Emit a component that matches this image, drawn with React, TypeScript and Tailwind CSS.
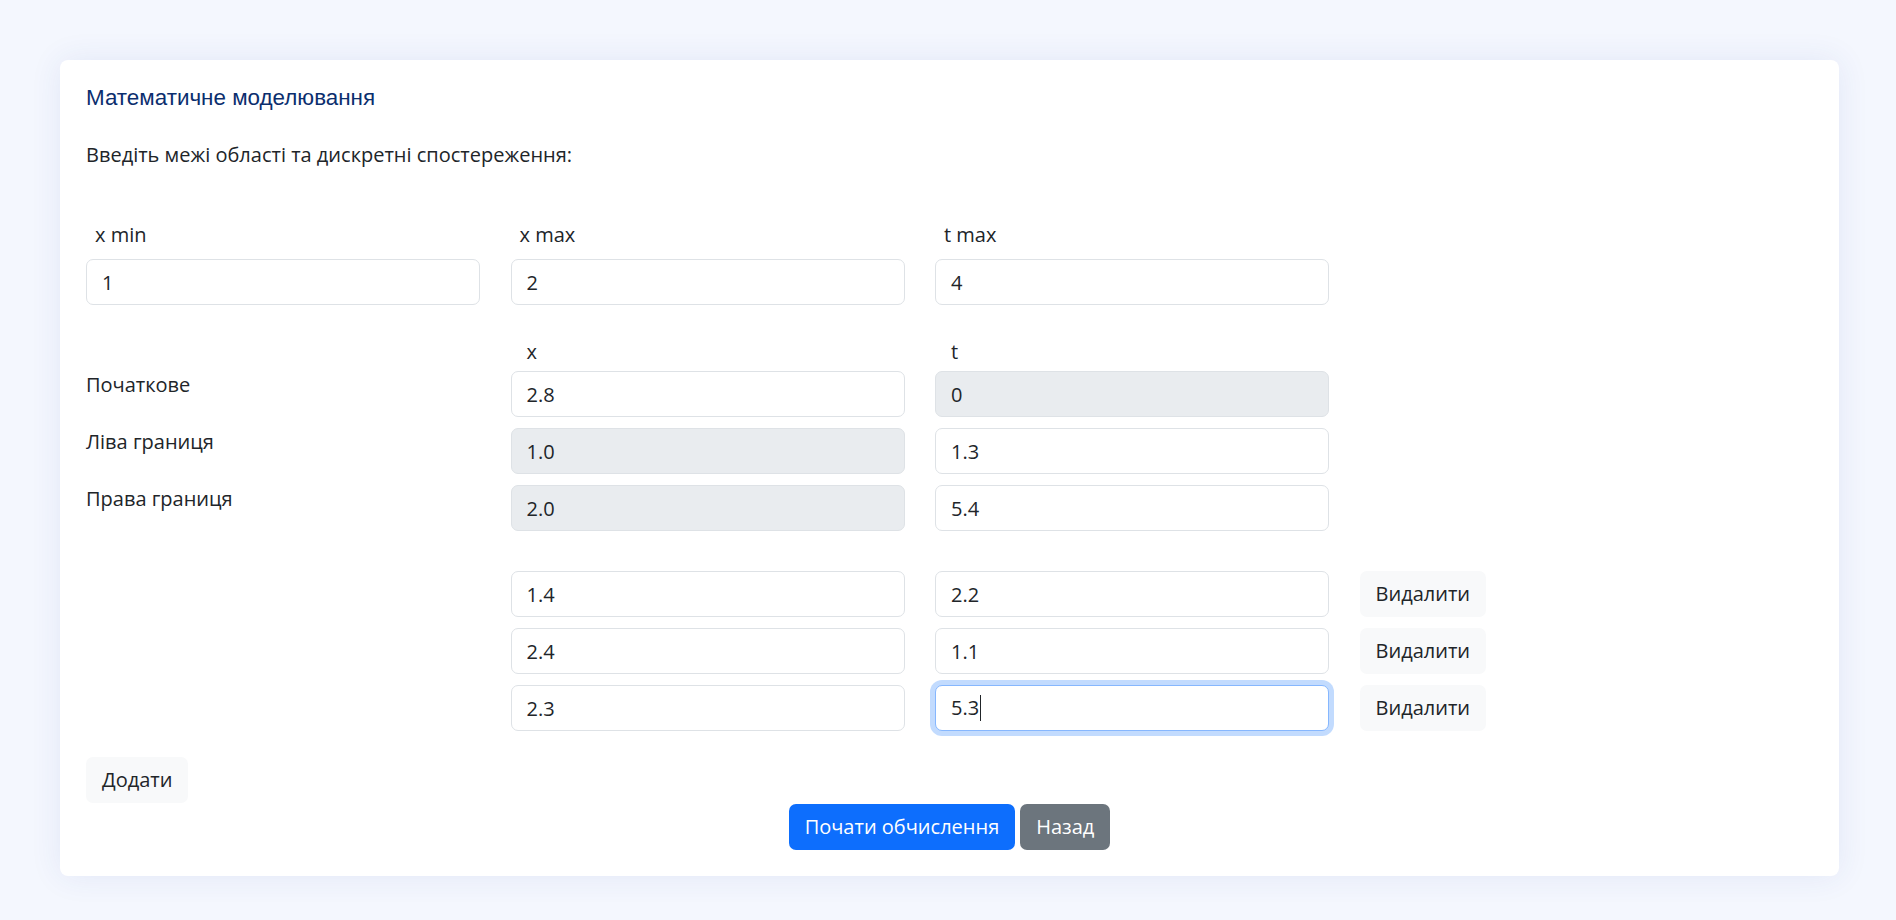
import React from "react";

const body = "font-['Open_Sans','Noto_Sans',sans-serif]";

function Field({
  value,
  disabled,
  focused,
}: {
  value: string;
  disabled?: boolean;
  focused?: boolean;
}) {
  if (focused) {
    return (
      <div className="h-[46px] w-[394px] rounded-[7px] border border-[#86b7fe] bg-white px-[15px] flex items-center text-[20px] text-[#212529] shadow-[0_0_0_5px_rgba(13,110,253,0.25)]">
        <span>{value}</span>
        <span className="ml-[1px] h-[26px] w-[1px] bg-[#212529]" />
      </div>
    );
  }
  return (
    <input
      readOnly
      value={value}
      disabled={disabled}
      className={
        "h-[46px] w-[394px] rounded-[7px] border border-[#dee2e6] px-[15px] text-[20px] text-[#212529] outline-none " +
        (disabled ? "bg-[#e9ecef]" : "bg-white")
      }
    />
  );
}

function LightButton({ children }: { children: React.ReactNode }) {
  return (
    <button className="h-[46px] rounded-[7px] bg-[#f8f9fa] px-[16px] text-[20px] text-[#212529]">
      {children}
    </button>
  );
}

export default function App() {
  const boundaries = [
    { label: "Початкове", x: "2.8", t: "0", xDis: false, tDis: true },
    { label: "Ліва границя", x: "1.0", t: "1.3", xDis: true, tDis: false },
    { label: "Права границя", x: "2.0", t: "5.4", xDis: true, tDis: false },
  ];

  const observations = [
    { x: "1.4", t: "2.2" },
    { x: "2.4", t: "1.1" },
    { x: "2.3", t: "5.3", focused: true },
  ];

  return (
    <div className={"min-h-screen bg-[#f4f7fe] pt-[60px] pb-[44px] " + body}>
      <div className="ml-[60px] w-[1779px] rounded-[8px] bg-white px-[26px] pt-[25px] pb-[26px] shadow-[0_0_32px_rgba(40,70,170,0.09)]">
        {/* Header */}
        <h5 className="h-[26px] font-['Liberation_Sans',Arial,sans-serif] text-[22.4px] leading-[26px] text-[#0b2e6e]">
          Математичне моделювання
        </h5>
        <p className="mt-[29px] text-[20px] leading-[30px] text-[#212529]">
          Введіть межі області та дискретні спостереження:
        </p>

        {/* Domain limits */}
        <div className="mt-[50px] flex gap-[30.5px]">
          {[
            ["x min", "1"],
            ["x max", "2"],
            ["t max", "4"],
          ].map(([label, value]) => (
            <div key={label} className="flex w-[394px] flex-col gap-[9px]">
              <label className="pl-[9px] text-[20px] leading-[30px] text-[#212529]">
                {label}
              </label>
              <Field value={value} />
            </div>
          ))}
        </div>

        {/* Boundary conditions */}
        <div className="mt-[32px] flex gap-[30.5px]">
          <div className="w-[394px]" />
          <div className="w-[394px] pl-[16px] text-[20px] leading-[30px] text-[#212529]">x</div>
          <div className="w-[394px] pl-[16px] text-[20px] leading-[30px] text-[#212529]">t</div>
        </div>
        <div className="mt-[4px] flex flex-col gap-[11px]">
          {boundaries.map((row) => (
            <div key={row.label} className="flex items-start gap-[30.5px]">
              <div className="w-[394px] -mt-[1px] text-[20px] leading-[30px] text-[#212529]">
                {row.label}
              </div>
              <Field value={row.x} disabled={row.xDis} />
              <Field value={row.t} disabled={row.tDis} />
            </div>
          ))}
        </div>

        {/* Observations */}
        <div className="mt-[40px] flex flex-col gap-[11px]">
          {observations.map((row, i) => (
            <div key={i} className="flex items-center gap-[30.5px]">
              <div className="w-[394px]" />
              <Field value={row.x} />
              <Field value={row.t} focused={row.focused} />
              <LightButton>Видалити</LightButton>
            </div>
          ))}
        </div>

        <div className="mt-[26px]">
          <LightButton>Додати</LightButton>
        </div>

        <div className="mt-[1px] flex justify-center gap-[5px]">
          <button className="h-[46px] rounded-[7px] bg-[#0d6efd] px-[16px] text-[20px] text-white">
            Почати обчислення
          </button>
          <button className="h-[46px] rounded-[7px] bg-[#6c757d] px-[16px] text-[20px] text-white">
            Назад
          </button>
        </div>
      </div>
    </div>
  );
}
